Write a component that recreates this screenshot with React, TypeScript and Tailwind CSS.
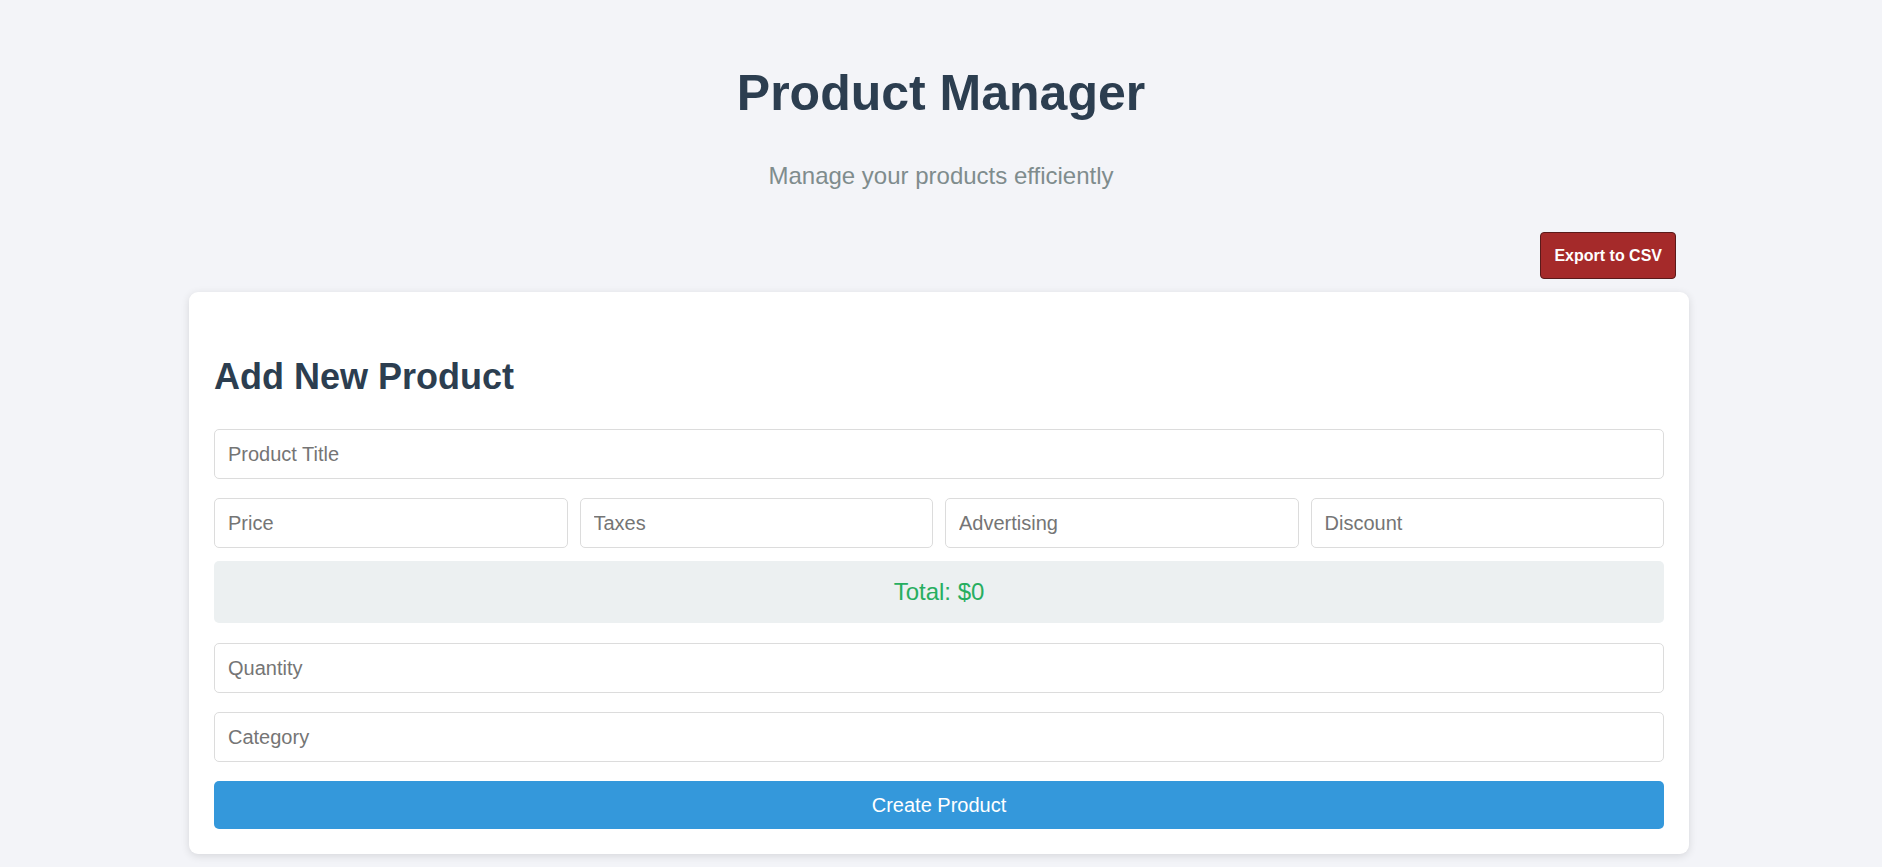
import React, { useState } from 'react';

const inputCls =
  'w-full h-[50px] px-[13px] bg-white border border-[#dcdcdc] rounded-[5px] text-[20px] text-[#333] placeholder:text-[#757575] outline-none';

const App: React.FC = () => {
  const [form, setForm] = useState({
    title: '',
    price: '',
    taxes: '',
    ads: '',
    discount: '',
    count: '',
    category: '',
  });

  const update = (key: keyof typeof form) => (e: React.ChangeEvent<HTMLInputElement>) =>
    setForm(prev => ({ ...prev, [key]: e.target.value }));

  // total = price + taxes + ads - discount
  const total =
    form.price === ''
      ? 0
      : (+form.price || 0) + (+form.taxes || 0) + (+form.ads || 0) - (+form.discount || 0);

  return (
    <div
      className="min-h-screen bg-[#f3f4f8] pb-10"
      style={{ fontFamily: '"Liberation Sans", Arial, sans-serif' }}
    >
      {/* Header */}
      <header className="pt-[64px] text-center">
        <h1 className="text-[50px] leading-[58px] font-bold text-[#2c3e50]">Product Manager</h1>
        <p className="mt-[40px] text-[24px] leading-[28px] text-[#7f8c8d]">Manage your products efficiently</p>
      </header>

      <div className="w-[1500px] ml-[189px]">
        <div className="flex justify-end pr-[13px] mt-[42px]">
          <button className="h-[47px] px-[13px] bg-[#a52a2a] border border-[#5a1a1a] rounded-[4px] text-white text-[16px] font-bold">
            Export to CSV
          </button>
        </div>

        {/* Form card */}
        <div className="mt-[13px] bg-white rounded-[9px] shadow-[0_2px_8px_rgba(0,0,0,0.12)] px-[25px] pt-[64px] pb-[25px]">
          <h2 className="text-[36px] leading-[41px] font-bold text-[#2c3e50]">Add New Product</h2>

          <div className="mt-[32px] flex flex-col">
            <input className={inputCls} placeholder="Product Title" value={form.title} onChange={update('title')} />

            <div className="mt-[19px] grid grid-cols-4 gap-[12px]">
              <input className={inputCls} placeholder="Price" value={form.price} onChange={update('price')} />
              <input className={inputCls} placeholder="Taxes" value={form.taxes} onChange={update('taxes')} />
              <input className={inputCls} placeholder="Advertising" value={form.ads} onChange={update('ads')} />
              <input className={inputCls} placeholder="Discount" value={form.discount} onChange={update('discount')} />
            </div>

            <div className="mt-[13px] h-[62px] rounded-[5px] bg-[#ecf0f1] flex items-center justify-center text-[24px] text-[#27ae60]">
              Total: ${total}
            </div>

            <input className={`${inputCls} mt-[20px]`} placeholder="Quantity" value={form.count} onChange={update('count')} />
            <input className={`${inputCls} mt-[19px]`} placeholder="Category" value={form.category} onChange={update('category')} />

            <button className="mt-[19px] h-[48px] rounded-[5px] bg-[#3498db] text-white text-[20px]">
              Create Product
            </button>
          </div>
        </div>
      </div>
    </div>
  );
};

export default App;
